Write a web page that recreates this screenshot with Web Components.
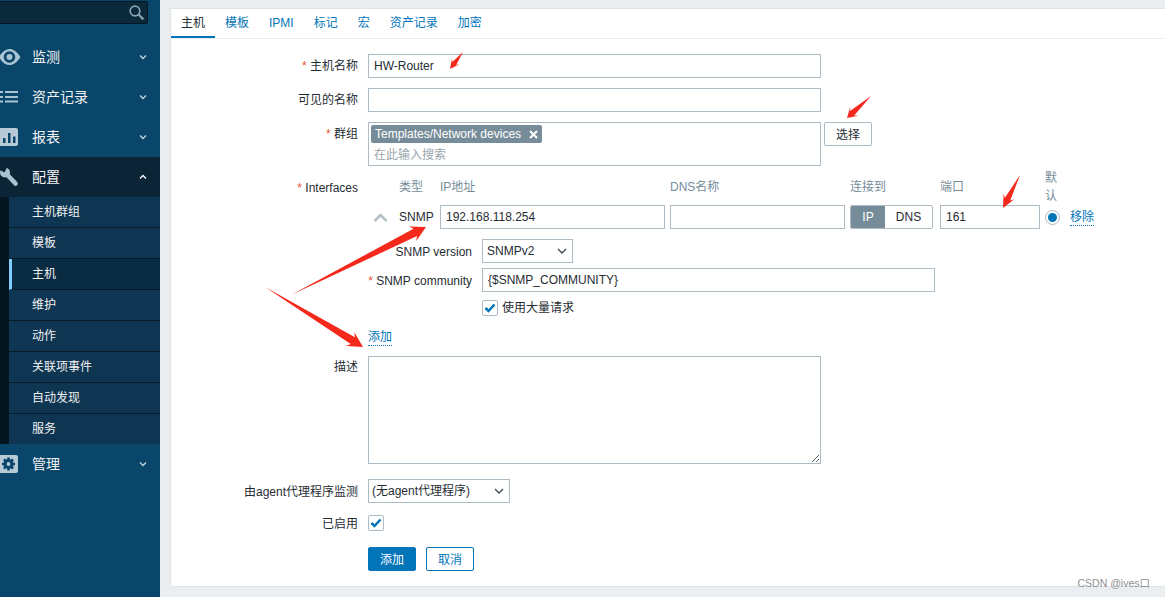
<!DOCTYPE html>
<html lang="zh">
<head>
<meta charset="utf-8">
<title>主机</title>
<style>
  html,body{margin:0;height:597px;overflow:hidden;background:#ebeef0}
  body{display:flex;font:12px/18px "Liberation Sans","Noto Sans CJK SC",sans-serif;color:#1f2c33;position:relative}
</style>
</head>
<body>
<z-sidebar>
  <z-nav-item label="监测"><svg slot="icon" width="22" height="18" viewBox="0 0 22 18"><path fill="#a9c3d3" fill-rule="evenodd" d="M-1 9C2 3.500 6 1 9.500 1S17 3.500 20.500 9c-3.500 5.500-7 8-11 8S2 14.500-1 9zM9.500 3.200a5.800 5.800 0 1 0 0 11.600a5.800 5.800 0 0 0 0-11.600zM9.500 6a3 3 0 1 1 0 6a3 3 0 0 1 0-6z"/></svg></z-nav-item>
  <z-nav-item label="资产记录"><svg slot="icon" width="22" height="16" viewBox="0 0 22 16"><path fill="#a9c3d3" d="M0 2h3v2H0zM5 2h13v2H5zM0 7h3v2H0zM5 7h13v2H5zM0 11.500h3v2H0zM5 11.500h13v2H5z"/></svg></z-nav-item>
  <z-nav-item label="报表"><svg slot="icon" width="22" height="20" viewBox="0 0 22 20"><rect x="-3" y="1" width="21" height="18" rx="2" fill="#b7cad6"/><path fill="#0a466a" d="M3 11h2.500v5H3zM8 6h2.500v10H8zM13 9.500h2.500V16H13z"/></svg></z-nav-item>
  <z-nav-item label="配置" open><svg slot="icon" width="22" height="20" viewBox="0 0 22 20"><path stroke="#a9c3d3" stroke-width="4.600" stroke-linecap="round" d="M7 7.500L15.500 16.500"/><circle cx="5" cy="5.500" r="5" fill="#a9c3d3"/><path fill="#0b2436" d="M-1 2.500L4.500 5.500L7 .5L3-1z"/></svg></z-nav-item>
  <z-submenu>
    <z-sub-item>主机群组</z-sub-item>
    <z-sub-item>模板</z-sub-item>
    <z-sub-item selected>主机</z-sub-item>
    <z-sub-item>维护</z-sub-item>
    <z-sub-item>动作</z-sub-item>
    <z-sub-item>关联项事件</z-sub-item>
    <z-sub-item>自动发现</z-sub-item>
    <z-sub-item>服务</z-sub-item>
  </z-submenu>
  <z-nav-item label="管理"><svg slot="icon" width="22" height="20" viewBox="0 0 22 20"><rect x="-1" y="1" width="19" height="18" rx="2" fill="#b7cad6"/><circle cx="8.500" cy="10" r="3.600" fill="none" stroke="#0a466a" stroke-width="3"/><path stroke="#0a466a" stroke-width="2.600" d="M8.500 3.500v13M2 10h13M3.900 5.400l9.200 9.200M13.100 5.400l-9.200 9.200"/><circle cx="8.500" cy="10" r="1.900" fill="#b7cad6"/></svg></z-nav-item>
</z-sidebar>

<z-panel>
  <z-tabs>
    <z-tab active>主机</z-tab><z-tab>模板</z-tab><z-tab>IPMI</z-tab><z-tab>标记</z-tab><z-tab>宏</z-tab><z-tab>资产记录</z-tab><z-tab>加密</z-tab>
  </z-tabs>
  <z-form>
    <z-row label="主机名称" required><z-field style="width:453px">HW-Router</z-field></z-row>
    <z-row label="可见的名称"><z-field style="width:453px"></z-field></z-row>
    <z-row label="群组" required><z-groups></z-groups></z-row>
    <z-row label="Interfaces" required style="margin-top:-7px;--label-top:7px"><z-interfaces></z-interfaces></z-row>
    <z-row label="描述" style="--row-h:23px"><z-textarea></z-textarea></z-row>
    <z-row label="由agent代理程序监测" style="margin-top:5px;--label-top:1px"><z-select style="width:142px;padding-left:3px">(无agent代理程序)</z-select></z-row>
    <z-row label="已启用" style="margin-top:1px;--row-h:18px"><z-check></z-check></z-row>
    <z-row style="margin-top:4px"><z-actions></z-actions></z-row>
  </z-form>
</z-panel>

<z-arrows></z-arrows>
<z-watermark>CSDN @ives口</z-watermark>

<script>
function def(name, html, extra) {
  const t = document.createElement('template');
  t.innerHTML = html;
  customElements.define(name, class extends HTMLElement {
    constructor() { super(); this.attachShadow({mode:'open'}).appendChild(t.content.cloneNode(true)); }
    connectedCallback() { if (extra) extra(this); }
  });
}

def('z-sidebar', `<style>
  :host{display:flex;flex-direction:column;width:160px;flex:none;height:597px;background:#0a466a;overflow:hidden}
  .search{margin:1px 12px 13px -4px;background:#0a2a3c;border:1px solid #04161f;border-radius:2px;display:flex;align-items:center;justify-content:flex-end;padding-right:3px;flex:none;box-sizing:content-box;height:21px}
</style>
<div class="search"><svg width="15" height="15" viewBox="0 0 15 15" fill="none" stroke="#8aa3b2" stroke-width="1.700"><circle cx="6" cy="6" r="4.800"/><path stroke-width="2.300" d="M9.500 9.500l4.800 4.800"/></svg></div>
<slot></slot>`);

def('z-nav-item', `<style>
  :host{display:flex;align-items:center;height:40px;flex:none;color:#f2f2f2;font-size:14px;position:relative}
  :host([open]){background:#0b2436}
  .ic{width:32px;height:40px;display:flex;align-items:center;flex:none}
  .t{flex:1}
  svg.c{margin-right:13px}
</style><span class="ic"><slot name="icon"></slot></span><span class="t"></span>
<svg class="c" width="8" height="6" viewBox="0 0 8 6" fill="none" stroke="#c3d3dd" stroke-width="1.300"><path d="M1 1.500l3 3 3-3"/></svg>`, el => {
  const s = el.shadowRoot;
  s.querySelector('.t').textContent = el.getAttribute('label');
  if (el.hasAttribute('open')) { s.querySelector('.c path').setAttribute('d','M1 4.500l3-3 3 3'); s.querySelector('.c').setAttribute('stroke','#fff'); }
});

def('z-submenu', `<style>:host{display:flex;flex-direction:column;height:247px;flex:none;border-left:9px solid #04161f;background:#0e3551;overflow:hidden}</style><slot></slot>`);

def('z-sub-item', `<style>
  :host{display:flex;align-items:center;height:31px;flex:none;box-sizing:border-box;border-bottom:1px solid #041b29;padding:0 0 0 23px;color:#f2f2f2;font-size:12px;background:#0e3551}
  :host([selected]){background:#0a2c42;border-left:3px solid #7fcdfd;padding-left:20px}
</style><slot></slot>`);

def('z-panel', `<style>
  :host{display:block;flex:1;height:579px;margin:8px 0 0 10px;background:#fff;box-sizing:border-box;border:1px solid #dfe4e7;border-right:0}
</style><slot></slot>`);

def('z-tabs', `<style>:host{display:flex;height:29px;border-bottom:1px solid #ebeef0;box-sizing:content-box}</style><slot></slot>`);
def('z-tab', `<style>
  :host{display:block;padding:0 10px;height:27px;line-height:28px;color:#0275b8;border-bottom:2px solid transparent}
  :host([active]){color:#1f2c33;border-bottom-color:#0275b8}
</style><slot></slot>`);

def('z-form', `<style>:host{display:flex;flex-direction:column;gap:10px;padding-top:15px}</style><slot></slot>`);

def('z-row', `<style>
  :host{display:grid;grid-template-columns:187px 1fr;column-gap:10px}
  .l{text-align:right;line-height:var(--row-h,24px);height:var(--row-h,24px);padding-top:var(--label-top,0);white-space:nowrap}
  .s{color:#e8542f}
</style><div class="l"><span class="s"></span><span class="x"></span></div><div class="f"><slot></slot></div>`, el => {
  const s = el.shadowRoot;
  s.querySelector('.x').textContent = el.getAttribute('label') || '';
  s.querySelector('.s').textContent = el.hasAttribute('required') ? '* ' : '';
});

const boxCss = `border:1px solid #acbbc4;box-sizing:border-box;background:#fff;`;
def('z-field', `<style>
  :host{display:block;height:24px;line-height:22px;padding:0 5px;${boxCss}white-space:nowrap;overflow:hidden}
</style><slot></slot>`);

def('z-select', `<style>
  :host{display:flex;align-items:center;justify-content:space-between;height:24px;padding:0 5px 0 4px;${boxCss}white-space:nowrap}
</style><slot></slot><svg width="10" height="7" viewBox="0 0 10 7" fill="none" stroke="#3a4a52" stroke-width="1.300"><path d="M1 1l4 4 4-4"/></svg>`);

def('z-check', `<style>
  :host{display:flex;align-items:center;justify-content:center;width:16px;height:16px;${boxCss}border-radius:2px}
</style><svg width="12" height="10" viewBox="0 0 12 10" fill="none" stroke="#0275b8" stroke-width="2.500"><path d="M1.500 5l3 3 6-6.500"/></svg>`);

def('z-btn', `<style>
  :host{display:flex;align-items:center;justify-content:center;width:48px;height:24px;box-sizing:border-box;border:1px solid #acbbc4;border-radius:2px;background:#fff;color:#1f2c33;padding-top:1px}
  :host([primary]){background:#0275b8;border-color:#0275b8;color:#fff}
  :host([outline]){border-color:#0275b8;color:#0275b8}
</style><slot></slot>`);

def('z-tag', `<style>
  :host{display:inline-flex;align-items:center;height:18px;background:#768d99;color:#fff;padding:0 4px;border-radius:2px;white-space:nowrap;gap:8px}
</style><slot></slot><svg width="9" height="9" viewBox="0 0 9 9" stroke="#fff" stroke-width="2"><path d="M1 1l7 7M8 1L1 8"/></svg>`);

def('z-groups', `<style>
  :host{display:flex;gap:3px;align-items:flex-start}
  .b{width:453px;height:44px;${boxCss}padding:2px;display:flex;flex-direction:column}
  .p{color:#9aa6ad;padding:2px 0 0 3px;line-height:20px}
</style><div class="b"><div><z-tag>Templates/Network devices</z-tag></div><div class="p">在此输入搜索</div></div><z-btn>选择</z-btn>`);

def('z-link', `<style>
  :host{color:#0275b8;border-bottom:1px dotted #0275b8;display:inline-block;line-height:15px;height:15px}
</style><slot></slot>`);

def('z-radio', `<style>
  :host{display:block;width:15px;height:15px;box-sizing:border-box;border:1px solid #acbbc4;border-radius:50%;padding:2px;background:#fff}
  i{display:block;width:9px;height:9px;border-radius:50%;background:#0275b8}
</style><i></i>`);

def('z-seg', `<style>
  :host{display:flex;height:24px;width:83px;box-sizing:border-box;border:1px solid #acbbc4;border-radius:2px;overflow:hidden}
  b{font-weight:400;display:flex;align-items:center;justify-content:center}
  .a{width:34px;background:#768d99;color:#fff}.c{flex:1}
</style><b class="a">IP</b><b class="c">DNS</b>`);

def('z-interfaces', `<style>
  :host{display:block}
  .g{display:grid;grid-template-columns:31px 41px 230px 180px 90px 105px 25px auto;grid-template-rows:36px 24px;align-items:center}
  .h{color:#768d99}
  .d{width:15px;line-height:18px}
  .mid{display:grid;grid-template-columns:104px auto;column-gap:10px;row-gap:5px;margin-top:10px;align-items:center;justify-content:start}
  .lab{text-align:right;white-space:nowrap;padding-top:1px}
  .s{color:#e8542f}
  .cb{display:flex;align-items:center;gap:4px;margin-top:3px;height:16px}
  .add{margin-top:12px;height:18px}
</style>
<div class="g">
  <span></span><span class="h">类型</span><span class="h">IP地址</span><span class="h">DNS名称</span><span class="h">连接到</span><span class="h">端口</span><span class="h d">默认</span><span></span>
  <svg width="15" height="9" viewBox="0 0 15 9" fill="none" stroke="#b4c0c7" stroke-width="2.600" style="margin-left:5px"><path d="M1.500 8l6-6 6 6"/></svg>
  <span>SNMP</span>
  <z-field style="width:225px">192.168.118.254</z-field>
  <z-field style="width:175px"></z-field>
  <z-seg></z-seg>
  <z-field style="width:100px">161</z-field>
  <z-radio></z-radio>
  <span><z-link>移除</z-link></span>
</div>
<div class="mid">
  <span class="lab">SNMP version</span><z-select style="width:91px">SNMPv2</z-select>
  <span class="lab"><span class="s">* </span>SNMP community</span><z-field style="width:453px">{$SNMP_COMMUNITY}</z-field>
  <span></span><div class="cb"><z-check></z-check><span>使用大量请求</span></div>
</div>
<div class="add"><z-link>添加</z-link></div>`);

def('z-textarea', `<style>
  :host{display:block;width:453px;height:108px}
  textarea{display:block;width:453px;height:108px;margin:0;${boxCss}outline:0;resize:both;border-radius:0}
</style><textarea></textarea>`);

def('z-actions', `<style>:host{display:flex;gap:10px}</style><z-btn primary>添加</z-btn><z-btn outline>取消</z-btn>`);

/* red annotation arrows drawn over the form: tail x,y, tip x,y, head width, head length, shaft width at head */
const ARROWS = [
  [463,52,450,69,10,10,5],
  [871,96,847,118,12,10,6],
  [1020,175,1003,208,12,13,6],
  [291,295,426,227,16,15,8],
  [265,287,363,347,16,15,8]
];
function arrowPts([x1,y1,x2,y2,hw,hl,sw]) {
  const dx=x2-x1, dy=y2-y1, L=Math.hypot(dx,dy), ux=dx/L, uy=dy/L, nx=-uy, ny=ux;
  const bx=x2-ux*hl, by=y2-uy*hl, nb=x2-ux*(hl-3), mb=y2-uy*(hl-3);
  const p=[[x1,y1],[nb+nx*sw/2,mb+ny*sw/2],[bx+nx*hw/2,by+ny*hw/2],[x2,y2],[bx-nx*hw/2,by-ny*hw/2],[nb-nx*sw/2,mb-ny*sw/2]];
  return p.map(a=>a[0].toFixed(1)+','+a[1].toFixed(1)).join(' ');
}
def('z-arrows', `<style>:host{position:absolute;left:0;top:0;width:1165px;height:597px;pointer-events:none}svg{display:block}</style>
<svg width="1165" height="597" viewBox="0 0 1165 597">${ARROWS.map(a=>`<polygon fill="#f5291b" points="${arrowPts(a)}"/>`).join('')}</svg>`);

def('z-watermark', `<style>:host{position:absolute;right:15px;top:574px;color:#8f8f8f;font-size:10.5px;line-height:18px;white-space:nowrap}</style><slot></slot>`);
</script>
</body>
</html>
